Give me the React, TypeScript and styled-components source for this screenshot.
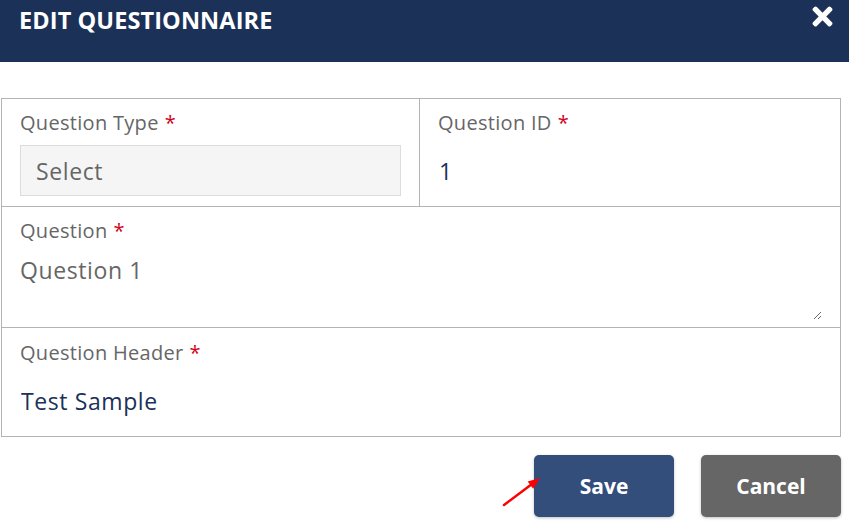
import React, { useState } from 'react';
import styled, { createGlobalStyle } from 'styled-components';
import { FaTimes } from 'react-icons/fa';

const GlobalStyle = createGlobalStyle`
  html, body {
    margin: 0;
    padding: 0;
    background: #ffffff;
    font-family: 'Open Sans', 'Noto Sans', sans-serif;
  }
`;

const Modal = styled.div`
  width: 849px;
  height: 527px;
  background: #fff;
  position: relative;
  overflow: hidden;
`;

const Header = styled.div`
  height: 62px;
  background: #1b3158;
  display: flex;
  justify-content: space-between;
  align-items: flex-start;
  padding: 0 12px 0 19px;
  box-sizing: border-box;
`;

const Title = styled.h2`
  margin: 4px 0 0;
  color: #fff;
  font-size: 23.5px;
  font-weight: 700;
  letter-spacing: 0.1px;
  line-height: 32px;
`;

const CloseButton = styled.button`
  border: none;
  background: none;
  color: #fff;
  padding: 0;
  margin-top: 2px;
  font-size: 29px;
  display: flex;
  cursor: pointer;
`;

const FormGrid = styled.div`
  margin: 36px 0 0 1px;
  width: 839px;
  border-top: 1px solid #b3b3b3;
  border-left: 1px solid #b3b3b3;
  display: grid;
  grid-template-columns: 418px 1fr;
`;

const Cell = styled.div<{ $span?: boolean; $top?: number; $bottom?: number }>`
  grid-column: ${(p) => (p.$span ? '1 / -1' : 'auto')};
  border-right: 1px solid #b3b3b3;
  border-bottom: 1px solid #b3b3b3;
  padding: ${(p) => p.$top ?? 12}px 18px ${(p) => p.$bottom ?? 10}px 18px;
  display: flex;
  flex-direction: column;
  gap: 10px;
`;

const Label = styled.label`
  font-size: 20px;
  line-height: 24px;
  color: #666;
  letter-spacing: 0.3px;
`;

const Required = styled.span`
  color: #d0021b;
  margin-left: 6px;
`;

const Field = styled.input<{ $filled?: boolean }>`
  height: 51px;
  box-sizing: border-box;
  border: 1px solid ${(p) => (p.$filled ? '#dcdcdc' : 'transparent')};
  background: ${(p) => (p.$filled ? '#f5f5f5' : '#fff')};
  margin: 0 ${(p) => (p.$filled ? '0' : '-18px')};
  padding: 0 0 0 ${(p) => (p.$filled ? '15px' : '18px')};
  font-family: inherit;
  font-size: 23px;
  letter-spacing: 0.6px;
  color: #1b3158;
  outline: none;

  &::placeholder {
    color: #666;
  }
`;

const TextArea = styled.textarea`
  height: 65px;
  margin: 0 0 0 -2px;
  border: none;
  padding: 2px 2px 0;
  resize: vertical;
  font-family: inherit;
  font-size: 23px;
  line-height: 30px;
  letter-spacing: 0.6px;
  color: #666;
  outline: none;
`;

const Actions = styled.div`
  display: flex;
  justify-content: flex-end;
  gap: 27px;
  margin: 18px 8px 0 0;
  position: relative;
`;

const ActionButton = styled.button<{ $variant: 'primary' | 'secondary' }>`
  width: 140px;
  height: 62px;
  border: none;
  border-radius: 5px;
  background: ${(p) => (p.$variant === 'primary' ? '#344e7c' : '#666666')};
  color: #fff;
  font-family: inherit;
  font-size: 21px;
  font-weight: 700;
  box-shadow: 0 1px 3px rgba(0, 0, 0, 0.25);
  cursor: pointer;
`;

const Pointer = styled.svg`
  position: absolute;
  left: 500px;
  top: 20px;
`;

export default function App() {
  const [question, setQuestion] = useState('Question 1');

  return (
    <Modal>
      <GlobalStyle />
      <Header>
        <Title>EDIT QUESTIONNAIRE</Title>
        <CloseButton aria-label="Close">
          <FaTimes />
        </CloseButton>
      </Header>

      <FormGrid>
        <Cell>
          <Label>
            Question Type<Required>*</Required>
          </Label>
          <Field $filled placeholder="Select" readOnly />
        </Cell>
        <Cell>
          <Label>
            Question ID<Required>*</Required>
          </Label>
          <Field defaultValue="1" />
        </Cell>
        <Cell $span $bottom={7}>
          <Label>
            Question<Required>*</Required>
          </Label>
          <TextArea value={question} onChange={(e) => setQuestion(e.target.value)} />
        </Cell>
        <Cell $span $top={13}>
          <Label>
            Question Header<Required>*</Required>
          </Label>
          <Field defaultValue="Test Sample" />
        </Cell>
      </FormGrid>

      <Actions>
        <Pointer width="45" height="35" viewBox="0 0 45 35">
          <line x1="4" y1="30" x2="32" y2="9" stroke="#f00" strokeWidth="2.5" strokeLinecap="round" />
          <polygon points="40,3 33.1,13.8 27.7,6.6" fill="#f00" />
        </Pointer>
        <ActionButton $variant="primary">Save</ActionButton>
        <ActionButton $variant="secondary">Cancel</ActionButton>
      </Actions>
    </Modal>
  );
}
